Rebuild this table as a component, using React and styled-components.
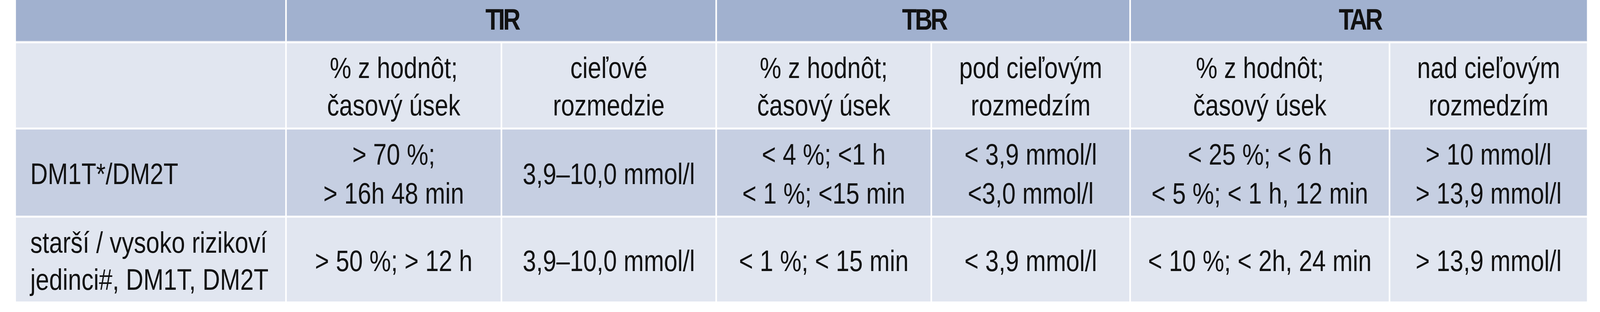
import React, { useEffect, useState } from "react";
import styled, { createGlobalStyle } from "styled-components";

const DESIGN_WIDTH = 5021;

const GlobalStyle = createGlobalStyle`
  html, body {
    margin: 0;
    padding: 0;
    background: #ffffff;
    overflow: hidden;
  }
  body {
    font-family: "Liberation Sans", Arial, Helvetica, sans-serif;
    color: #111111;
  }
`;

const Viewport = styled.div`
  width: 100vw;
  height: 800px;
  overflow: hidden;
  background: #ffffff;
`;

const Page = styled.div`
  width: ${DESIGN_WIDTH}px;
  height: 800px;
  padding-left: 50px;
  box-sizing: border-box;
  transform-origin: 0 0;
`;

const Table = styled.div`
  display: grid;
  grid-template-columns: 845px 671px 669px 670px 619px 809px 617px;
  grid-template-rows: 106px 216px 221px 215px;
  column-gap: 5px;
  row-gap: 5px;
  width: 4930px;
`;

const tones = {
  head: "#a1b1cf",
  light: "#e1e6f0",
  mid: "#c6cfe2",
};

const Cell = styled.div`
  grid-column: span ${(p) => p.$span || 1};
  background: ${(p) => tones[p.$tone]};
  display: flex;
  flex-direction: column;
  justify-content: center;
  align-items: ${(p) => (p.$left ? "flex-start" : "center")};
  text-align: ${(p) => (p.$left ? "left" : "center")};
  padding: 6px 0 0 ${(p) => (p.$left ? "45px" : "0")};
  box-sizing: border-box;
  font-size: 76px;
  line-height: ${(p) => p.$lh || 96}px;
  white-space: nowrap;
`;

const HeadCell = styled(Cell)`
  font-weight: 700;
  padding: 0 0 6px 6px;
  letter-spacing: -6px;
  box-shadow: inset 0 -2px 0 #b9c4da;
`;

const Lines = ({ items }) =>
  items.map((t, i) => (
    <React.Fragment key={i}>
      {i > 0 && <br />}
      {t}
    </React.Fragment>
  ));

const subHeads = [
  ["% z hodnôt;", "časový úsek"],
  ["cieľové", "rozmedzie"],
  ["% z hodnôt;", "časový úsek"],
  ["pod cieľovým", "rozmedzím"],
  ["% z hodnôt;", "časový úsek"],
  ["nad cieľovým", "rozmedzím"],
];

const rows = [
  {
    tone: "mid",
    lh: 100,
    label: ["DM1T*/DM2T"],
    cells: [
      ["> 70 %;", "> 16h 48 min"],
      ["3,9–10,0 mmol/l"],
      ["< 4 %; <1 h", "< 1 %; <15 min"],
      ["< 3,9 mmol/l", "<3,0 mmol/l"],
      ["< 25 %; < 6 h", "< 5 %; < 1 h, 12 min"],
      ["> 10 mmol/l", "> 13,9 mmol/l"],
    ],
  },
  {
    tone: "light",
    lh: 95,
    label: ["starší / vysoko rizikoví", "jedinci#, DM1T, DM2T"],
    cells: [
      ["> 50 %; > 12 h"],
      ["3,9–10,0 mmol/l"],
      ["< 1 %; < 15 min"],
      ["< 3,9 mmol/l"],
      ["< 10 %; < 2h, 24 min"],
      ["> 13,9 mmol/l"],
    ],
  },
];

const fitScale = () =>
  typeof window === "undefined"
    ? 1
    : Math.min(1, window.innerWidth / DESIGN_WIDTH);

export default function App() {
  const [scale, setScale] = useState(fitScale);

  useEffect(() => {
    const onResize = () => setScale(fitScale());
    window.addEventListener("resize", onResize);
    return () => window.removeEventListener("resize", onResize);
  }, []);

  return (
    <>
      <GlobalStyle />
      <Viewport>
        <Page style={{ transform: `scaleX(${scale})` }}>
          <Table>
            <HeadCell $tone="head" />
            <HeadCell $tone="head" $span={2}>TIR</HeadCell>
            <HeadCell $tone="head" $span={2}>TBR</HeadCell>
            <HeadCell $tone="head" $span={2}>TAR</HeadCell>

            <Cell $tone="light" $left />
            {subHeads.map((s, i) => (
              <Cell key={i} $tone="light">
                <div>
                  <Lines items={s} />
                </div>
              </Cell>
            ))}

            {rows.map((r, ri) => (
              <React.Fragment key={ri}>
                <Cell $tone={r.tone} $left $lh={r.lh}>
                  <div>
                    <Lines items={r.label} />
                  </div>
                </Cell>
                {r.cells.map((c, ci) => (
                  <Cell key={ci} $tone={r.tone} $lh={r.lh}>
                    <div>
                      <Lines items={c} />
                    </div>
                  </Cell>
                ))}
              </React.Fragment>
            ))}
          </Table>
        </Page>
      </Viewport>
    </>
  );
}
